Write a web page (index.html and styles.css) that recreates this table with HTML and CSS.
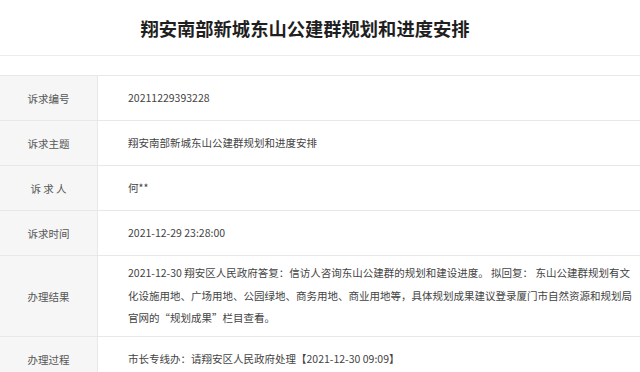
FILE: index.html
```html
<!DOCTYPE html>
<html lang="zh-CN">
<head>
<meta charset="utf-8">
<title>翔安南部新城东山公建群规划和进度安排</title>
<link rel="stylesheet" href="styles.css">
</head>
<body>
<div class="page">
  <header class="head">
    <h1 class="title">翔安南部新城东山公建群规划和进度安排</h1>
  </header>
  <table class="detail">
    <tr class="row">
      <th class="label">诉求编号</th>
      <td class="value">20211229393228</td>
    </tr>
    <tr class="row">
      <th class="label">诉求主题</th>
      <td class="value">翔安南部新城东山公建群规划和进度安排</td>
    </tr>
    <tr class="row">
      <th class="label">诉 求 人</th>
      <td class="value">何**</td>
    </tr>
    <tr class="row">
      <th class="label">诉求时间</th>
      <td class="value">2021-12-29 23:28:00</td>
    </tr>
    <tr class="row tall">
      <th class="label">办理结果</th>
      <td class="value multi">2021-12-30 翔安区人民政府答复：信访人咨询东山公建群的规划和建设进度。 拟回复： 东山公建群规划有文<br>化设施用地、广场用地、公园绿地、商务用地、商业用地等，具体规划成果建议登录厦门市自然资源和规划局<br>官网的“规划成果”栏目查看。</td>
    </tr>
    <tr class="row">
      <th class="label">办理过程</th>
      <td class="value">市长专线办：请翔安区人民政府处理【2021-12-30 09:09】</td>
    </tr>
  </table>
</div>
</body>
</html>
```

FILE: styles.css
```css
html, body {
  margin: 0;
  padding: 0;
  background: #ffffff;
}

body {
  font-family: "Noto Sans CJK SC", "Microsoft YaHei", sans-serif;
  color: #333333;
}

.page {
  width: 640px;
}

.head {
  height: 55px;
  border-bottom: 1px solid #ececec;
  display: flex;
  align-items: center;
  justify-content: center;
  padding-right: 30px;
}

.title {
  margin: 0;
  font-size: 18.3px;
  font-weight: bold;
  color: #1f1f1f;
}

.detail {
  margin-top: 19px;
  width: 100%;
  border-collapse: collapse;
  border-top: 1px solid #e8e8e8;
}

.row {
  height: 45px;
  border-bottom: 1px solid #e8e8e8;
}

.label {
  width: 97px;
  background: #f6f6f6;
  border-right: 1px solid #e8e8e8;
  font-weight: normal;
  font-size: 10.5px;
  color: #555555;
  text-align: center;
  padding: 0;
}

.value {
  font-size: 10.5px;
  color: #444444;
  padding: 0 4px 0 30px;
  line-height: 22.5px;
  white-space: nowrap;
}

.tall {
  height: 81px;
}

.multi {
  padding-top: 6px;
  padding-bottom: 6px;
}
```
